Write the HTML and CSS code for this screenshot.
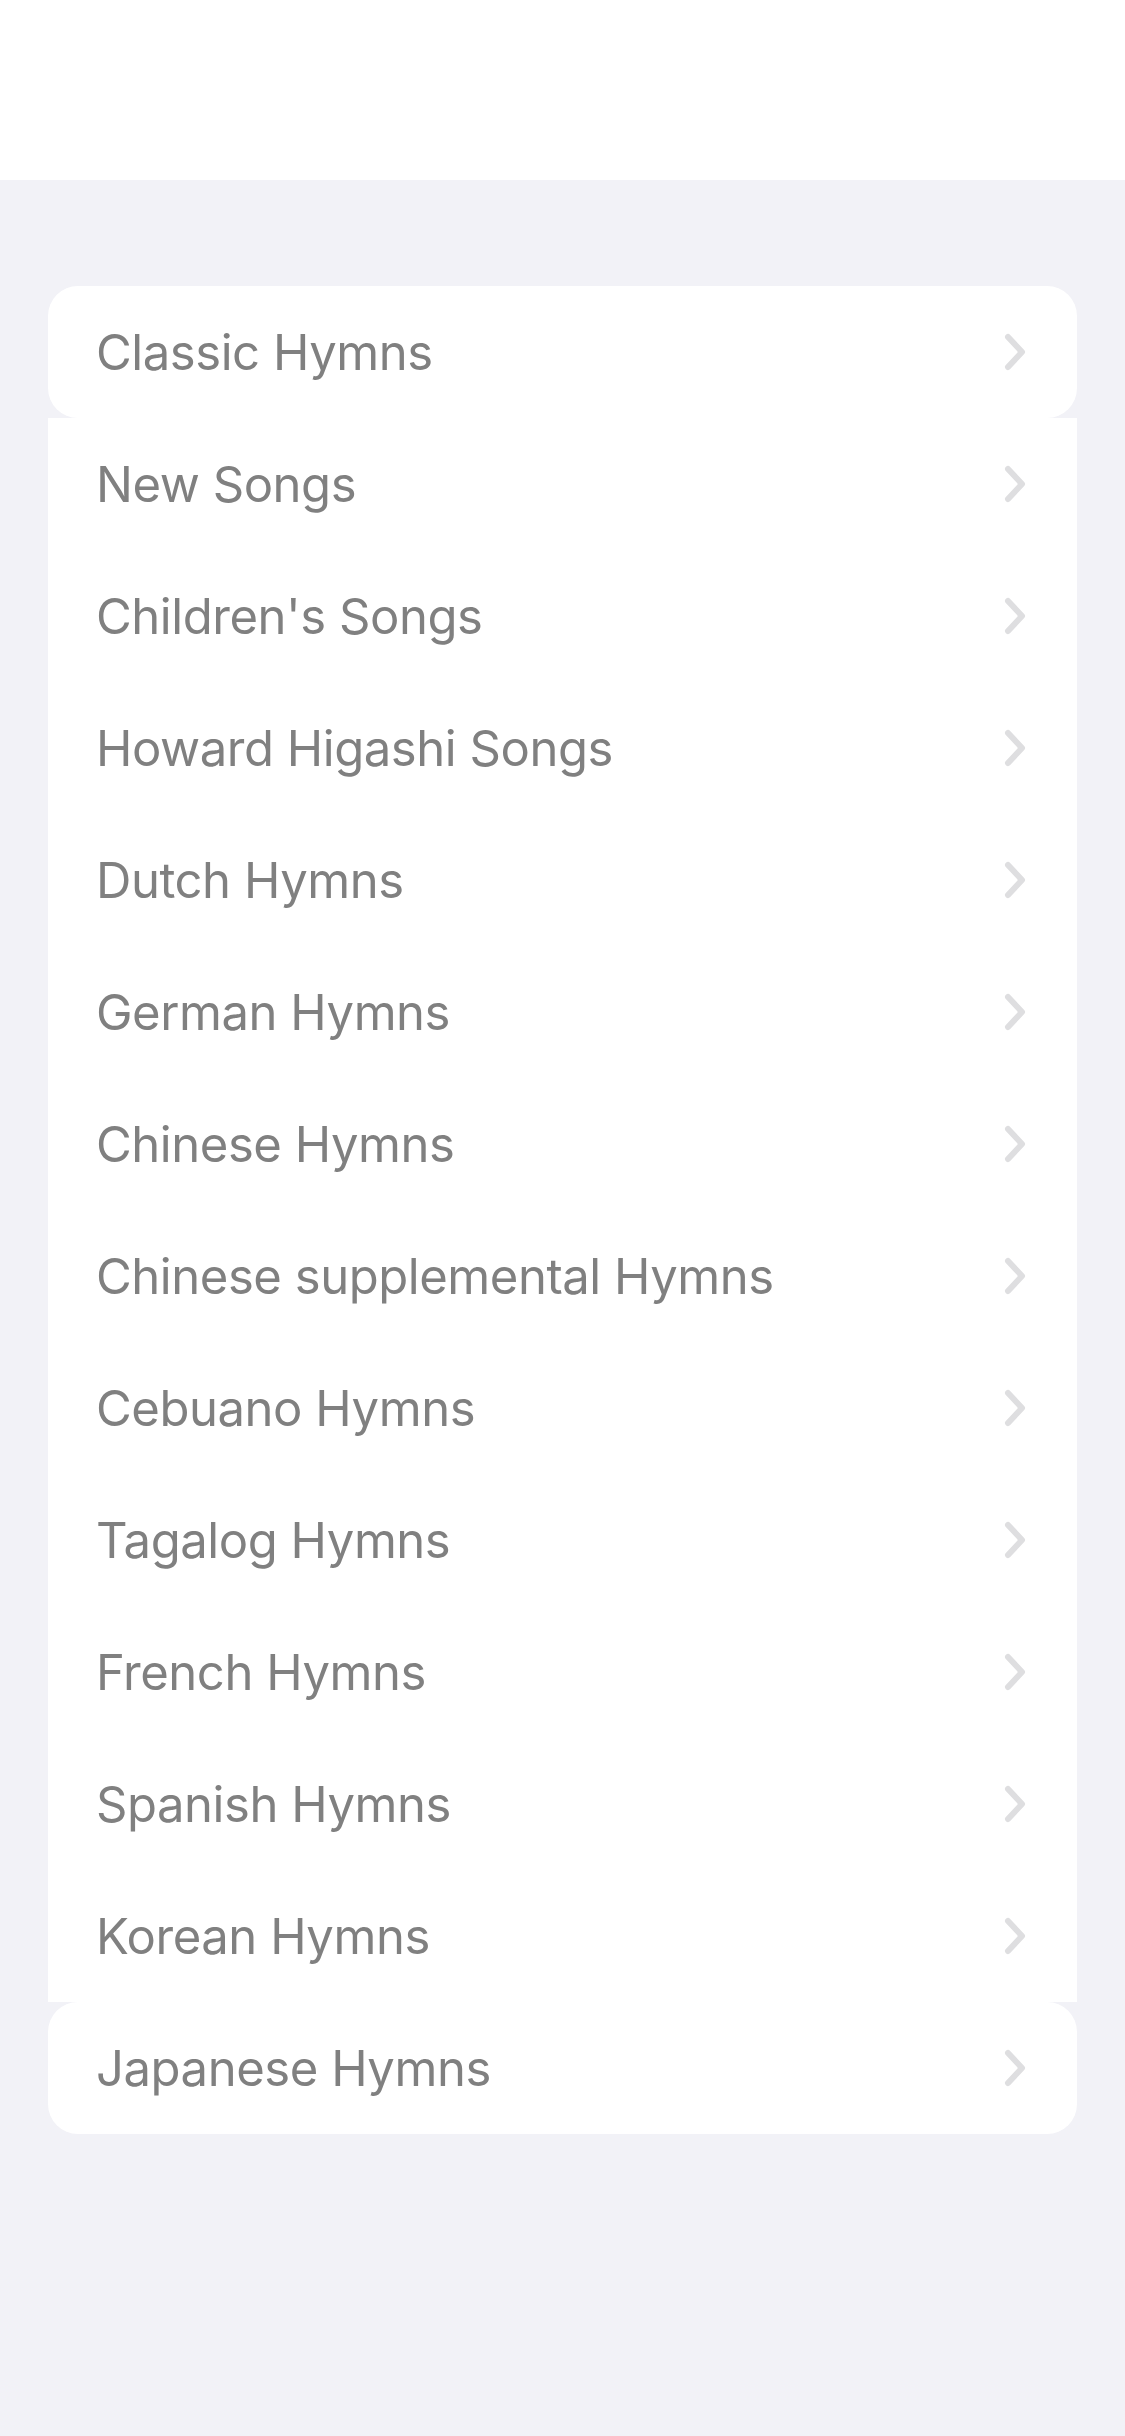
FILE: index.html
```html
<!DOCTYPE html>
<html>
<head>
<meta charset="utf-8">
<link rel="stylesheet" href="styles.css">
</head>
<body>
<header class="top"></header>
<main class="content">
  <ul class="list">
    <li class="row"><span class="label">Classic Hymns</span><svg class="chev" viewBox="0 0 22 38"><path d="M4 4 L18 19 L4 34"/></svg></li>
    <li class="row"><span class="label">New Songs</span><svg class="chev" viewBox="0 0 22 38"><path d="M4 4 L18 19 L4 34"/></svg></li>
    <li class="row"><span class="label">Children's Songs</span><svg class="chev" viewBox="0 0 22 38"><path d="M4 4 L18 19 L4 34"/></svg></li>
    <li class="row"><span class="label">Howard Higashi Songs</span><svg class="chev" viewBox="0 0 22 38"><path d="M4 4 L18 19 L4 34"/></svg></li>
    <li class="row"><span class="label">Dutch Hymns</span><svg class="chev" viewBox="0 0 22 38"><path d="M4 4 L18 19 L4 34"/></svg></li>
    <li class="row"><span class="label">German Hymns</span><svg class="chev" viewBox="0 0 22 38"><path d="M4 4 L18 19 L4 34"/></svg></li>
    <li class="row"><span class="label">Chinese Hymns</span><svg class="chev" viewBox="0 0 22 38"><path d="M4 4 L18 19 L4 34"/></svg></li>
    <li class="row"><span class="label">Chinese supplemental Hymns</span><svg class="chev" viewBox="0 0 22 38"><path d="M4 4 L18 19 L4 34"/></svg></li>
    <li class="row"><span class="label">Cebuano Hymns</span><svg class="chev" viewBox="0 0 22 38"><path d="M4 4 L18 19 L4 34"/></svg></li>
    <li class="row"><span class="label">Tagalog Hymns</span><svg class="chev" viewBox="0 0 22 38"><path d="M4 4 L18 19 L4 34"/></svg></li>
    <li class="row"><span class="label">French Hymns</span><svg class="chev" viewBox="0 0 22 38"><path d="M4 4 L18 19 L4 34"/></svg></li>
    <li class="row"><span class="label">Spanish Hymns</span><svg class="chev" viewBox="0 0 22 38"><path d="M4 4 L18 19 L4 34"/></svg></li>
    <li class="row"><span class="label">Korean Hymns</span><svg class="chev" viewBox="0 0 22 38"><path d="M4 4 L18 19 L4 34"/></svg></li>
    <li class="row"><span class="label">Japanese Hymns</span><svg class="chev" viewBox="0 0 22 38"><path d="M4 4 L18 19 L4 34"/></svg></li>
  </ul>
</main>
</body>
</html>
```
FILE: styles.css
```css
html, body {
  margin: 0;
  padding: 0;
}
body {
  width: 1125px;
  height: 2436px;
  background: #f2f2f7;
  font-family: Inter, "Noto Sans", "Liberation Sans", sans-serif;
  overflow: hidden;
}
.top {
  height: 180px;
  background: #ffffff;
}
.content {
  padding: 106px 48px 0 48px;
}
.list {
  list-style: none;
  margin: 0;
  padding: 0;
  display: flex;
  flex-direction: column;
}
.row {
  height: 132px;
  background: #ffffff;
  display: flex;
  align-items: center;
  justify-content: space-between;
  padding: 0 51px 0 48px;
}
.row:first-child,
.row:last-child {
  border-radius: 30px;
}
.label {
  font-size: 49px;
  color: #808080;
  letter-spacing: -0.45px;
}
.chev {
  width: 22px;
  height: 38px;
  fill: none;
  stroke: #dedee0;
  stroke-width: 6;
  stroke-linecap: round;
  stroke-linejoin: round;
}
```
